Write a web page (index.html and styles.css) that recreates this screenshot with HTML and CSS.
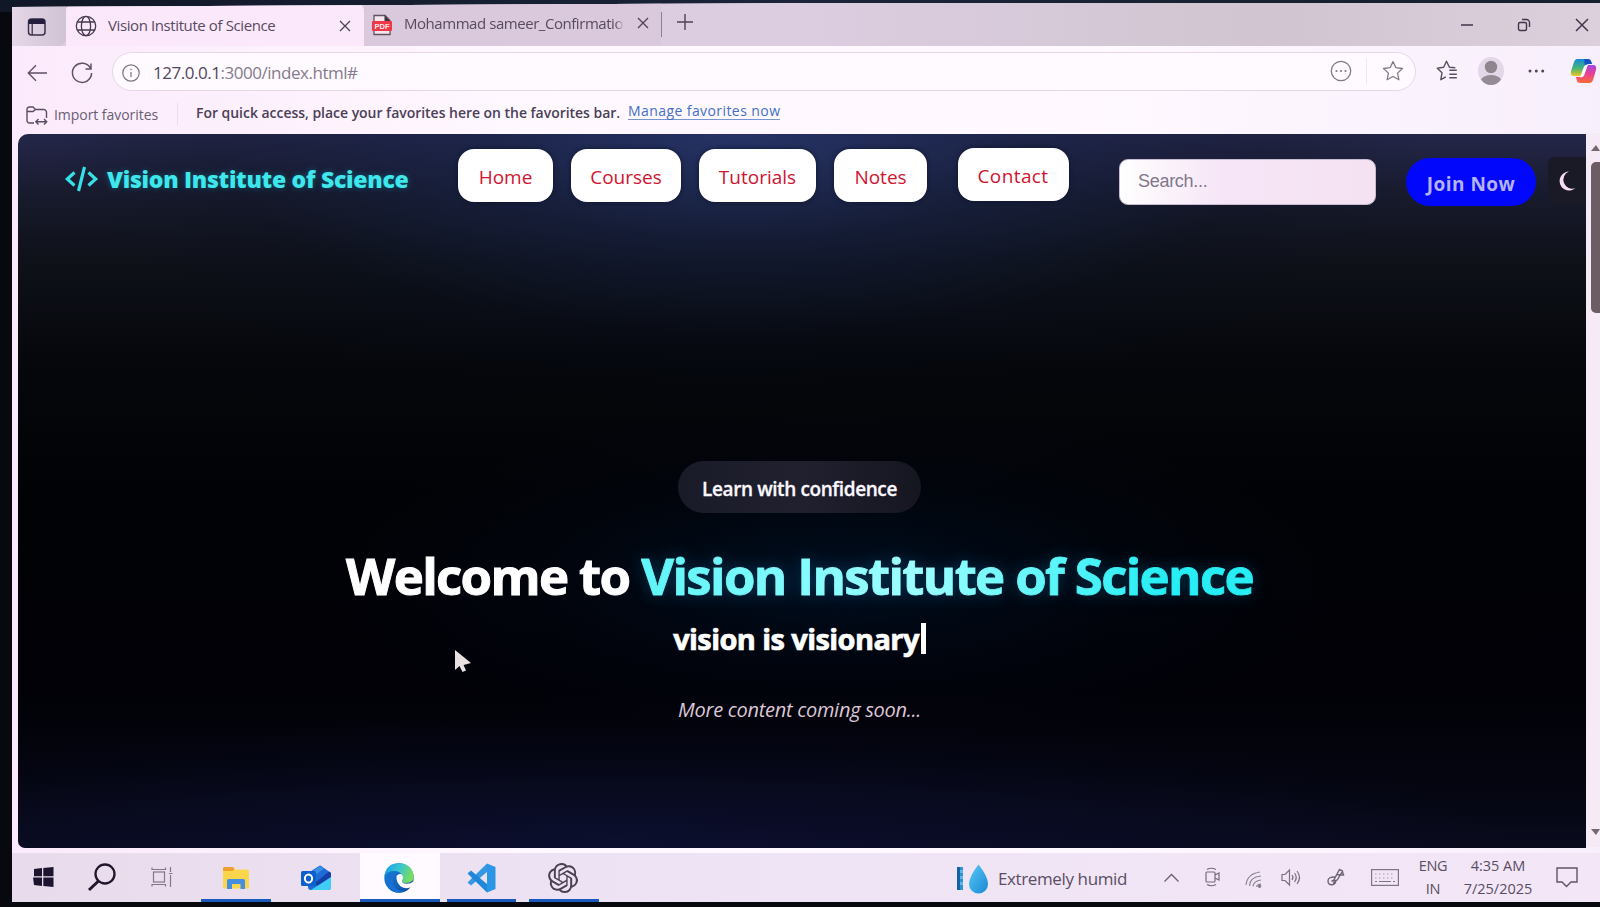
FILE: index.html
```html
<!DOCTYPE html>
<html lang="en">
<head>
<meta charset="utf-8">
<title>Vision Institute of Science</title>
<link rel="stylesheet" href="styles.css">
</head>
<body>
<div class="screen">
  <div class="browser">
    <div class="tabs">
      <div class="tab-actions">
        <svg width="20" height="20" viewBox="0 0 20 20"><rect x="1.5" y="2" width="16.5" height="16" rx="3" fill="none" stroke="#39304a" stroke-width="1.5"/><path d="M1.5 7V5a3 3 0 0 1 3-3H15a3 3 0 0 1 3 3v2z" fill="#241d3c"/><path d="M5.2 7v11" stroke="#39304a" stroke-width="1.3"/></svg>
      </div>
      <div class="tab tab-active">
        <svg width="22" height="22" viewBox="0 0 22 22" fill="none" stroke="#453a50" stroke-width="1.3"><circle cx="11" cy="11" r="9.7"/><ellipse cx="11" cy="11" rx="4.6" ry="9.7"/><path d="M2.4 7h17.2M2.4 15h17.2"/></svg>
        <span class="tab-title title-one">Vision Institute of Science</span>
        <svg class="close-one" width="12" height="12" viewBox="0 0 12 12" stroke="#4d4258" stroke-width="1.3"><path d="M1 1l10 10M11 1L1 11"/></svg>
      </div>
      <div class="tab tab-idle">
        <svg width="20" height="22" viewBox="0 0 20 22"><path d="M2 20.5V1.5h11l5 5v14z" fill="#f6e6f0" stroke="#62505e" stroke-width="1.3"/><path d="M12.5 1v6H18z" fill="#3f3444"/><rect x="0" y="7" width="20" height="10" rx="1" fill="#ee3846"/><text class="pdf" x="10" y="15" text-anchor="middle">PDF</text></svg>
        <span class="tab-title title-two">Mohammad sameer_Confirmation</span>
        <svg class="close-two" width="12" height="12" viewBox="0 0 12 12" stroke="#4d4258" stroke-width="1.3"><path d="M1 1l10 10M11 1L1 11"/></svg>
      </div>
      <i class="tab-rule"></i>
      <svg class="plus" width="18" height="18" viewBox="0 0 18 18" stroke="#4f4357" stroke-width="1.4"><path d="M9 1v16M1 9h16"/></svg>
      <div class="window-buttons">
        <svg width="12" height="14" viewBox="0 0 12 14" stroke="#41364a" stroke-width="1.4"><path d="M0 7h12"/></svg>
        <svg width="14" height="14" viewBox="0 0 14 14" fill="none" stroke="#41364a" stroke-width="1.4"><rect x="1.5" y="4.5" width="8" height="8" rx="1.5"/><path d="M5 1.5h4.5a3 3 0 0 1 3 3V9"/></svg>
        <svg width="14" height="14" viewBox="0 0 14 14" stroke="#41364a" stroke-width="1.5"><path d="M1 1l12 12M13 1L1 13"/></svg>
      </div>
    </div>

    <div class="toolbar">
      <svg class="back" width="21" height="18" viewBox="0 0 21 18" fill="none" stroke="#5d5267" stroke-width="1.4"><path d="M20 9H1.5M9 1.2L1.3 9 9 16.8"/></svg>
      <svg class="reload" width="22" height="22" viewBox="0 0 22 22" fill="none" stroke="#5d5267" stroke-width="1.5"><path d="M19.6 6.5A9.6 9.6 0 1 0 20.6 11M20 1.5V7h-5.5"/></svg>
      <div class="address">
        <svg class="info" width="18" height="18" viewBox="0 0 18 18" fill="none" stroke="#7c7183" stroke-width="1.2"><circle cx="9" cy="9" r="8.2"/><path d="M9 8v5M9 4.8v1.5"/></svg>
        <span class="url"><b>127.0.0.1</b>:3000/index.html#</span>
        <svg class="more" width="22" height="22" viewBox="0 0 22 22"><circle cx="11" cy="11" r="9.7" fill="none" stroke="#83798a" stroke-width="1.3"/><g fill="#83798a"><circle cx="6.5" cy="11" r="1.1"/><circle cx="11" cy="11" r="1.1"/><circle cx="15.5" cy="11" r="1.1"/></g></svg>
        <i class="address-rule"></i>
        <svg class="star" width="22" height="22" viewBox="0 0 22 22" fill="none" stroke="#83798a" stroke-width="1.3" stroke-linejoin="round"><path d="M11 1.5l2.9 6.2 6.6.8-4.9 4.6 1.3 6.7-5.9-3.3-5.9 3.3 1.3-6.7L1.5 8.500l6.600-.8z"/></svg>
      </div>
      <svg class="favs" width="22" height="22" viewBox="0 0 22 22" fill="none" stroke="#5a4f63" stroke-width="1.4" stroke-linejoin="round"><path d="M19.500 8l-5.900-.5L10.700 1.500 7.900 7.600 1.500 8.500l4.700 4.600L5 20l5-2.800M13.500 10.500H21M13.500 14.500H21M13.500 18H21" transform="translate(-.2 -.3)"/></svg>
      <svg class="avatar" width="26" height="28" viewBox="0 0 26 28"><ellipse cx="13" cy="14" rx="13" ry="14" fill="#e2d8e7"/><circle cx="13" cy="10" r="6.200" fill="#8e858f"/><path d="M3 22.500Q6 18 13 18T23 22.500Q19 28 13 28T3 22.500z" fill="#948b95"/></svg>
      <svg class="dots" width="17" height="6" viewBox="0 0 17 6" fill="#51465a"><circle cx="2" cy="3" r="1.5"/><circle cx="8.300" cy="3" r="1.500"/><circle cx="14.700" cy="3" r="1.500"/></svg>
      <svg class="copilot" width="27" height="26" viewBox="0 0 27 26">
        <defs>
          <linearGradient id="cpa" x1="0" y1="0" x2="0" y2="1"><stop offset="0" stop-color="#158bdc"/><stop offset=".55" stop-color="#47b573"/><stop offset="1" stop-color="#f0c51e"/></linearGradient>
          <linearGradient id="cpb" x1="0" y1="0" x2="0" y2="1"><stop offset="0" stop-color="#a545e2"/><stop offset=".5" stop-color="#e8418f"/><stop offset="1" stop-color="#fa6b35"/></linearGradient>
        </defs>
        <path d="M7 1h11q2.500 0 3.200 2.500L22 6h-3q-3 0-4 3l-2 6q-1 3-4 3H4q-4 0-3-5L4 4q1-3 3-3z" fill="url(#cpa)"/>
        <path d="M14 1h4q2.500 0 3.200 2.500L22 6h-3q-3 0-4 3z" fill="#1551c4"/>
        <path d="M20 25H10q-2.500 0-3.200-2.500L6 19h3q3 0 4-3l2-6q1-3 4-3h4q4 0 3 5l-3 10q-1 3-3 3z" fill="url(#cpb)"/>
        <path d="M14 8.500q.8-2 4-2l-3.500 10q-1 3-4.500 3z" fill="#fff"/>
      </svg>
    </div>

    <div class="favorites">
      <svg width="22" height="20" viewBox="0 0 22 20" fill="none" stroke="#5a4e64" stroke-width="1.400"><path d="M8 17H3.500a2.500 2.500 0 0 1-2.500-2.500v-11A2.300 2.300 0 0 1 3.300 1H7l2.500 2.500H17A3 3 0 0 1 20.500 6v6M1 5.500h6l2.500-2M10 15.800h10M12.500 13L9.800 15.800l2.700 2.800M18 13l2.700 2.800-2.700 2.800"/></svg>
      <span class="import">Import favorites</span>
      <i class="fav-rule"></i>
      <span class="hint">For quick access, place your favorites here on the favorites bar.</span>
      <a class="manage">Manage favorites now</a>
    </div>

    <div class="viewport">
      <main class="page">
        <header class="site-header">
          <div class="logo">
            <svg width="33" height="26" viewBox="0 0 33 26" fill="none" stroke="#36e0e6" stroke-width="3.200"><path d="M9.500 6.500L2.300 13l7.200 6.500M23.500 6.500l7.200 6.500-7.200 6.500M19.500 1l-6 24"/></svg>
            <span class="brand">Vision Institute of Science</span>
          </div>
          <nav class="nav">
            <a class="n-home">Home</a>
            <a class="n-courses">Courses</a>
            <a class="n-tutorials">Tutorials</a>
            <a class="n-notes">Notes</a>
            <a class="n-contact">Contact</a>
          </nav>
          <div class="search">Search...</div>
          <div class="join">Join Now</div>
          <div class="theme"><svg width="18" height="20" viewBox="0 0 18 20"><path d="M11 .5A9.500 9.500 0 1 0 17.500 17 8.500 8.500 0 0 1 11 .5z" fill="#f6dcec"/></svg></div>
        </header>
        <section class="hero">
          <div class="pill"><span>Learn with confidence</span></div>
          <h1><span class="welcome">Welcome to</span> <span class="name">Vision Institute of Science</span></h1>
          <p class="tagline"><span>vision is visionary</span><i class="caret"></i></p>
          <p class="soon">More content coming soon...</p>
        </section>
      </main>
      <div class="scrollbar">
        <i class="arrow-up"></i>
        <i class="thumb"></i>
        <i class="arrow-down"></i>
      </div>
    </div>
  </div>

  <footer class="taskbar">
    <div class="task start"><svg width="21" height="20" viewBox="0 0 21 20" fill="#1d1530"><path d="M1 2l8-1v8.300H1zM10.300 .9L20.500 0v9.300H10.300zM0 10.500h9V19l-8-1zM10.300 10.500h10.200V20l-10.200-.9z"/></svg></div>
    <div class="task find"><svg width="28" height="28" viewBox="0 0 28 28" fill="none" stroke="#21172c" stroke-width="2.300"><circle cx="17" cy="11" r="9.500"/><path d="M10.500 18L1 27" stroke-width="3"/></svg></div>
    <div class="task view"><svg width="23" height="20" viewBox="0 0 23 20" fill="none" stroke="#83788a" stroke-width="1.200"><rect x="2.500" y="5" width="11" height="10"/><path d="M1 .5V2.500H14.500V.5M1 19.500v-2H14.500v2M19.500 0v5M19.500 8v12M18 6.500h3.500"/></svg></div>
    <div class="task files open"><svg width="26" height="23" viewBox="0 0 26 23"><path d="M0 1.500Q0 0 1.500 0H10l2 2.500H24.500Q26 2.500 26 4v17.500H0z" fill="#fbd64c"/><path d="M0 1.500Q0 0 1.500 0H10l1.500 2-2 2H0z" fill="#eda02c"/><path d="M4 22V13.500Q4 12 5.500 12h15Q22 12 22 13.500V22h-4.500v-5H9v5z" fill="#468ee0"/></svg></div>
    <div class="task mail"><svg width="31" height="26" viewBox="0 0 31 26"><path d="M7 8L18 1q1-.8 2.200 0L30 8v14q0 3-3 3H10q-3 0-3-3z" fill="#1d6bd4"/><path d="M10 7l9-6 4 2.500L12 12z" fill="#3590e6"/><path d="M14 18L28 6.500l2 1.500v4L17 22z" fill="#153fa5"/><path d="M10 25l20-13v10q0 3-3 3z" fill="#3fcdf8"/><rect x="0" y="6" width="15" height="15" rx="1.500" fill="#0d60cc"/><ellipse cx="7.500" cy="13.500" rx="3.600" ry="4.100" fill="none" stroke="#fff" stroke-width="2"/></svg></div>
    <div class="task edge open"><svg width="30" height="30" viewBox="0 0 30 30">
      <defs>
        <linearGradient id="ea" x1="0" y1="0" x2="1" y2=".3"><stop offset="0" stop-color="#1a9be4"/><stop offset=".5" stop-color="#34c3d9"/><stop offset="1" stop-color="#76dd62"/></linearGradient>
        <linearGradient id="eb" x1="0" y1="0" x2="1" y2="1"><stop offset="0" stop-color="#1687db"/><stop offset="1" stop-color="#10479f"/></linearGradient>
      </defs>
      <circle cx="15" cy="15" r="14.700" fill="url(#eb)"/>
      <path d="M.5 13Q2 .3 15 .3 27 .3 29.700 12q.8 8-7.700 8-5 0-4-2.500 1.200-2 .2-4.500Q16.500 8 10 8 3 8 .5 13z" fill="url(#ea)"/>
      <path d="M12.500 13q1.500-2.500 4.500-2 3.500 3 1 6.500-.8 3 5 3.300 4 0 6.500-2.500L31 21l-3 2.500q-6 3.500-11.500-.3Q12 19 12.500 13z" fill="#fffaff"/>
      <path d="M13 10.500Q7.500 14 9 20.500 12 28.500 20 28.500q-5 2.500-10 .3Q2 25 1.200 17 3 9 13 10.500z" fill="#1770d2"/>
    </svg></div>
    <div class="task code open"><svg width="29" height="30" viewBox="0 0 29 30"><path d="M20.500 8.500L4 22.500.5 19.500 20 .5z" fill="#3399e2"/><path d="M20.500 21.500L4 7.500.5 10.500 20 29.500z" fill="#2187d8"/><path d="M20 .5l8.500 3.500v22L20 29.500z" fill="#2b96e6"/></svg></div>
    <div class="task chat open"><svg width="30" height="30" viewBox="0 0 24 24" fill="#4a4051"><path d="M22.282 9.821a5.985 5.985 0 0 0-.516-4.910 6.046 6.046 0 0 0-6.510-2.900A6.065 6.065 0 0 0 4.981 4.182a5.985 5.985 0 0 0-3.998 2.900 6.046 6.046 0 0 0 .743 7.097 5.980 5.980 0 0 0 .510 4.911 6.051 6.051 0 0 0 6.515 2.900A5.985 5.985 0 0 0 13.260 24a6.056 6.056 0 0 0 5.772-4.206 5.990 5.990 0 0 0 3.997-2.900 6.056 6.056 0 0 0-.747-7.073zM13.260 22.430a4.476 4.476 0 0 1-2.876-1.040l.141-.081 4.779-2.758a.795.795 0 0 0 .392-.681v-6.737l2.020 1.168a.071.071 0 0 1 .038.052v5.583a4.504 4.504 0 0 1-4.494 4.494zM3.600 18.304a4.470 4.470 0 0 1-.535-3.014l.142.085 4.783 2.759a.771.771 0 0 0 .780 0l5.843-3.369v2.332a.080.080 0 0 1-.033.062L9.740 19.950a4.500 4.500 0 0 1-6.140-1.646zM2.340 7.896a4.485 4.485 0 0 1 2.366-1.973V11.600a.766.766 0 0 0 .388.676l5.815 3.355-2.020 1.168a.076.076 0 0 1-.071 0l-4.830-2.786A4.504 4.504 0 0 1 2.340 7.872zm16.597 3.855l-5.833-3.387L15.119 7.200a.076.076 0 0 1 .071 0l4.830 2.791a4.494 4.494 0 0 1-.676 8.105v-5.678a.790.790 0 0 0-.407-.667zm2.010-3.023l-.141-.085-4.774-2.782a.776.776 0 0 0-.785 0L9.409 9.230V6.897a.066.066 0 0 1 .028-.061l4.830-2.787a4.500 4.500 0 0 1 6.680 4.660zM8.307 12.863l-2.020-1.164a.080.080 0 0 1-.038-.057V6.075a4.500 4.500 0 0 1 7.375-3.453l-.142.080-4.778 2.758a.795.795 0 0 0-.393.681zm1.097-2.365l2.602-1.500 2.607 1.500v2.999l-2.597 1.500-2.607-1.500z"/></svg></div>
    <div class="weather">
      <svg width="31" height="30" viewBox="0 0 31 30"><defs><linearGradient id="drop" x1="0" y1="0" x2="1" y2="1"><stop offset="0" stop-color="#58c9f8"/><stop offset="1" stop-color="#1988d3"/></linearGradient></defs><path d="M0 3h6v3H3v3h3v3H3v3h3v3H3v3h3v5H0z" fill="#1660a4"/><path d="M3 3h3v23H3z" fill="#35a5e2" opacity=".75"/><path d="M21.500 .5q9.500 12 9.500 19.500a9.500 9.500 0 0 1-19 0Q12 12.500 21.500 .5z" fill="url(#drop)"/></svg>
      <span>Extremely humid</span>
    </div>
    <div class="tray">
      <svg class="t-up" width="15" height="9" viewBox="0 0 15 9" fill="none" stroke="#6a5f70" stroke-width="1.300"><path d="M.5 8.500l7-7 7 7"/></svg>
      <svg class="t-meet" width="15" height="20" viewBox="0 0 15 20" fill="none" stroke="#766b7c" stroke-width="1.200"><rect x="1" y="5" width="9" height="10" rx="1"/><path d="M10 8l4-2v7l-4-2M2 2.500Q6 0 11 2.500M2 17.500q4 2.500 9 0"/></svg>
      <svg class="t-wifi" width="17" height="17" viewBox="0 0 17 17" fill="none" stroke="#8e8494" stroke-width="1.200"><path d="M1 14Q2 3 15 1M4.500 15Q5 6 16 5M8 15.500Q8.500 10 16 9M11.500 16q.5-3 4.500-3"/><circle cx="14.500" cy="15" r="1.300" fill="#6b6071"/></svg>
      <svg class="t-sound" width="20" height="17" viewBox="0 0 20 17" fill="none" stroke="#7c7182" stroke-width="1.200"><path d="M1 5.500h3L8.500 1v15L4 11.500H1zM11 6q2 2.500 0 5M13.500 4q3.500 4.500 0 9M16 2q5 6.500 0 13"/></svg>
      <svg class="t-pen" width="18" height="18" viewBox="0 0 18 18" fill="none" stroke="#706576" stroke-width="1.400"><path d="M6 13.500L12.500 1.500l3 1.500-5 8.500-4.500 4M9.500 6.500l7 .5-1-3M8.500 9Q1 8.500 1 13t5 3.500q3-1 2.500-4-2.500-1-4 1"/></svg>
      <svg class="t-keys" width="28" height="17" viewBox="0 0 28 17" fill="none" stroke="#7f7485" stroke-width="1.200"><rect x=".6" y=".6" width="26.800" height="15.800"/><path d="M4 5h20M4 9h20" stroke-dasharray="1.500 2.500" stroke="#a399a8"/><path d="M4 12.500h2M8 12.500h12M22 12.500h2"/></svg>
      <div class="lang"><span>ENG</span><span>IN</span></div>
      <div class="clock"><span class="time">4:35 AM</span><span class="date">7/25/2025</span></div>
      <svg class="t-note" width="22" height="21" viewBox="0 0 22 21" fill="none" stroke="#5f5468" stroke-width="1.400"><path d="M1 1h20v14h-6l-4.500 4.500L6 15H1z"/></svg>
    </div>
  </footer>
  <svg class="pointer" width="18" height="24" viewBox="0 0 18 24"><path d="M1 1v20l4.500-4 3 6 3.500-1.500-2.500-5.500L17 14z" fill="#e9e0e2"/></svg>
</div>
</body>
</html>
```

FILE: styles.css
```css
* { box-sizing: border-box; }
body { margin: 0; background: #04040a; font-family: "Open Sans", "Noto Sans", sans-serif; }
svg { display: block; flex: none; overflow: visible; }
i { display: block; flex: none; }
span, a { white-space: nowrap; }

.screen {
  position: relative;
  width: 1600px; height: 907px; overflow: hidden;
  padding: 3px 0 5px 12px;
  display: flex; flex-direction: column;
  background: linear-gradient(90deg, #101827, #1b2438 50%, #14202c) top / 100% 12px no-repeat, #08080f;
}
.browser {
  flex: none; height: 850px; display: flex; flex-direction: column;
  background: linear-gradient(90deg, #fbeafb, #fff9ff 35%, #fff9ff 65%, #f8effc);
  clip-path: polygon(0 4px, 50% 0, 100% 0, 100% 100%, 0 100%);
}

/* tab strip */
.tabs {
  height: 43px; flex: none; display: flex; align-items: center;
  background: linear-gradient(90deg, #dfcbe0, #dccde0 50%, #d0c5d0 80%, #ddd0dd);
}
.tab-actions {
  width: 54px; height: 43px; padding: 4px 0 0 15px; display: flex; align-items: center;
  background: linear-gradient(90deg, #e6d7e8, #cfc3d4); border-bottom-right-radius: 8px;
}
.tab { height: 43px; display: flex; align-items: center; }
.tab-active {
  width: 298px; padding: 2px 0 0 9px;
  background: #fbe8fb; border-radius: 8px 8px 0 0;
}
.tab-idle { width: 297px; padding-left: 8px; background: #dac8dc; }
.tab-title { font-size: 15px; color: #574b60; }
.title-one { width: 170px; margin: -2px 0 0 11px; letter-spacing: -.4px; }
.title-two {
  width: 220px; margin: -3px 0 0 12px; letter-spacing: -.45px; overflow: hidden;
  -webkit-mask-image: linear-gradient(90deg, #000 96%, transparent);
  mask-image: linear-gradient(90deg, #000 96%, transparent);
}
.close-one { margin-left: 61px; }
.close-two { margin: -3px 0 0 13px; }
.tab-rule { width: 1px; height: 25px; background: #8d8093; }
.plus { margin-left: 14px; margin-top: -6px; }
.window-buttons { display: flex; margin-left: auto; margin-right: 11px; gap: 44px; align-items: center; }
.pdf { font: bold 7.5px "Liberation Sans", sans-serif; fill: #ffe9ef; }

/* address row */
.toolbar { height: 50px; flex: none; display: flex; align-items: center; }
.back { margin-left: 15px; margin-top: 4px; }
.reload { margin-left: 23px; margin-top: 4px; }
.address {
  width: 1304px; height: 39px; margin-left: 19px; display: flex; align-items: center;
  border: 1px solid #e5d7e6; border-radius: 20px; background: #fffaff;
}
.info { margin: 3px 0 0 9px; }
.url { width: 400px; margin: 2px 0 0 13px; font-size: 17px; letter-spacing: -.47px; color: #857b8c; }
.url b { font-weight: 400; color: #51465b; }
.more { margin-left: auto; margin-top: -1px; }
.address-rule { width: 1px; height: 26px; margin-left: 14px; background: #f0e5f1; }
.star { margin: 0 11px 0 15px; }
.favs { margin-left: 20px; }
.avatar { margin-left: 20px; }
.dots { margin-left: 24px; }
.copilot { margin-left: 25px; }

/* favorites row */
.favorites { height: 37px; flex: none; display: flex; align-items: center; padding-left: 14px; font-size: 14px; padding-bottom: 2px; }
.favorites svg { margin-top: 4px; }
.import { width: 106px; margin: 2px 0 0 6px; color: #695e73; letter-spacing: -.05px; }
.fav-rule { width: 1px; height: 22px; margin-left: 17px; background: #eadff0; }
.hint { width: 425px; margin: -2px 0 0 18px; color: #4b4056; font-weight: 600; letter-spacing: -.03px; }
.manage { margin-left: 7px; margin-top: -5px; color: #3f6fc4; letter-spacing: .42px; line-height: 17px; border-bottom: 1px solid #7695d0; }

/* page */
.viewport { height: 720px; flex: none; display: flex; padding-left: 6px; }
.page {
  width: 1568px; height: 714px; margin-top: 1px; border-radius: 10px 0 0 7px; overflow: hidden;
  display: flex; flex-direction: column;
  background:
    radial-gradient(ellipse 520px 170px at 52% 62%, rgba(0, 20, 44, .65), rgba(0, 10, 26, .3) 55%, transparent),
    radial-gradient(ellipse 700px 270px at 46% 0, rgba(38, 54, 108, .8), rgba(22, 34, 72, .5) 40%, rgba(8, 14, 32, .2) 75%, transparent),
    radial-gradient(ellipse 900px 130px at 38% 100%, rgba(14, 18, 58, .6), transparent),
    linear-gradient(180deg, #25274a 0, #171a2b 9%, #0e1118 18%, #05070c 32%, #010205 50%, #010107 78%, #04050f 90%, #090a1c 100%);
}
.site-header { height: 92px; flex: none; display: flex; align-items: center; }
.logo { display: flex; align-items: center; margin: -3px 0 0 47px; width: 393px; }
.brand {
  margin-left: 9px; font-size: 23px; font-weight: 800; letter-spacing: -.26px; color: #3ee7ec;
  text-shadow: 0 0 6px rgba(0, 210, 230, .35);
}
.nav { display: flex; width: 611px; margin-top: -9px; }
.nav a {
  height: 53px; display: flex; align-items: center; justify-content: center;
  border-radius: 16px; background: #fff; color: #d0142f; font-size: 19px;
  box-shadow: 0 0 4px #10152c; padding-top: 3px;
}
.n-home { width: 95px; }
.nav .n-courses { width: 110px; margin-left: 18px; }
.nav .n-tutorials { width: 117px; margin-left: 18px; }
.nav .n-notes { width: 93px; margin-left: 18px; }
.nav .n-contact { width: 111px; margin-left: 31px; margin-top: -1px; letter-spacing: .4px; padding-right: 1px; }
.search {
  width: 257px; height: 46px; margin-left: 50px; margin-top: 3px; padding: 0 0 1px 18px;
  display: flex; align-items: center; border-radius: 9px; border: 1px solid #c8bdd0;
  background: linear-gradient(90deg, #fff, #f6e5f6 40%, #f4e2f2);
  color: #80788c; font: 18px "Liberation Sans", Arial, sans-serif; letter-spacing: -.3px;
}
.join {
  width: 130px; height: 48px; margin-left: 30px; margin-top: 4px;
  display: flex; align-items: center; justify-content: center;
  border-radius: 24px; background: #0007fb; color: #b5b2f8;
  font-size: 19px; font-weight: 700; letter-spacing: .5px; padding-top: 3px;
}
.theme {
  width: 38px; height: 48px; margin-left: 12px; margin-top: 2px; padding-left: 10px;
  display: flex; align-items: center; background: #191a26; border-radius: 6px 0 0 6px;
}

.hero { display: flex; flex-direction: column; align-items: center; padding: 235px 5px 0 0; }
.pill {
  width: 243px; height: 52px; display: flex; align-items: center; justify-content: center;
  border-radius: 26px; background: linear-gradient(90deg, #1a1b29, #20202f 50%, #161621);
  color: #fbf7ff; font-size: 19px; font-weight: 600; padding-top: 3px;
}
.pill span { letter-spacing: -.4px; -webkit-text-stroke: .3px #fbf7ff; }
h1 { margin: 27px 0 0; font-size: 51px; line-height: 70px; font-weight: 700; letter-spacing: -1.67px; color: #fff; white-space: nowrap; }
.welcome { -webkit-text-stroke: 1px #fff; }
.name {
  color: transparent; -webkit-background-clip: text; background-clip: text;
  -webkit-text-stroke: .9px transparent;
  background-image: linear-gradient(90deg, #5ff5f8, #9dffff 45%, #27eef4 85%);
  filter: drop-shadow(0 0 8px rgba(0, 120, 180, .4));
}
.tagline { margin: 8px 0 0; height: 40px; display: flex; align-items: center; color: #fff; font-size: 29px; font-weight: 700; letter-spacing: -.58px; -webkit-text-stroke: .7px #fff; }
.caret { width: 5px; height: 31px; margin-left: 2px; background: #fff; }
.soon { margin: 38px 0 0; font-size: 20px; line-height: 28px; font-style: italic; font-weight: 500; letter-spacing: -.28px; color: #dcc7d6; white-space: nowrap; }

.scrollbar {
  width: 14px; height: 714px; flex: none; padding-left: 5px;
  display: flex; flex-direction: column; align-items: flex-start; background: #f5eaf6;
}
.arrow-up, .arrow-down { border-left: 5px solid transparent; border-right: 4px solid transparent; }
.arrow-up { margin-top: 12px; border-bottom: 6px solid #75686f; }
.thumb { width: 9px; height: 151px; margin-top: 11px; border-radius: 5px 0 0 5px; background: #6c5d65; }
.arrow-down { margin-top: 516px; border-top: 6px solid #75686f; }

/* taskbar */
.taskbar {
  flex: none; height: 49px; display: flex; background: linear-gradient(90deg, #e8dcec, #eee3f4 40%, #f3e7f7);
}
.task { height: 49px; flex: none; display: flex; align-items: center; justify-content: center; padding-bottom: 2px; }
.open { border-bottom: 3px solid #185bbd; padding-bottom: 0; }
.open svg { margin-top: 4px; }
.start { width: 62px; }
.find { width: 56px; }
.view { width: 64px; }
.files { width: 70px; margin-left: 7px; }
.mail { width: 89px; }
.edge { width: 80px; background: #fffaff; }
.code { width: 69px; margin-left: 7px; }
.chat { width: 70px; margin-left: 13px; }
.mail svg { margin: 3px 0 0 2px; }
.edge svg, .chat svg { margin-left: -2px; }
.weather { margin-left: 358px; width: 207px; display: flex; align-items: center; padding-top: 2px; font-size: 17px; color: #5a4e62; }
.weather span { margin-left: 10px; letter-spacing: -.38px; }
.tray { display: flex; align-items: center; color: #584d62; font-size: 14.500px; padding-bottom: 1px; }
.t-meet { margin-left: 26px; }
.t-wifi { margin-left: 25px; margin-top: 4px; }
.t-sound { margin-left: 19px; }
.t-pen { margin-left: 26px; }
.t-keys { margin-left: 26px; }
.lang, .clock { display: flex; flex-direction: column; align-items: center; line-height: 23px; }
.lang { width: 32px; margin-left: 18px; letter-spacing: -.3px; }
.clock { width: 80px; margin-left: 9px; letter-spacing: 0; }
.t-note { margin-left: 18px; }

.pointer { position: absolute; left: 454px; top: 649px; }
```
